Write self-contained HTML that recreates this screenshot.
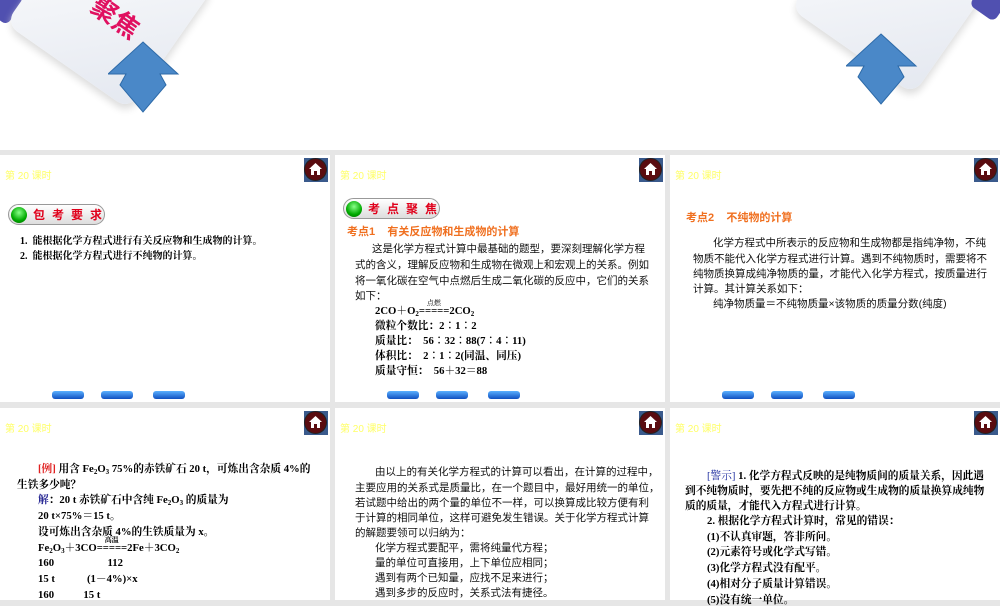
<!DOCTYPE html>
<html><head><meta charset="utf-8"><style>
*{margin:0;padding:0;box-sizing:border-box}
body{width:1000px;height:600px;overflow:hidden;background:#e6e6e6;position:relative;font-family:"Liberation Serif","Noto Serif CJK SC",serif;}
.top{position:absolute;left:0;top:0;width:1000px;height:150px;background:#fff;overflow:hidden}
.s{position:absolute;background:#fff;overflow:hidden}
.hd{position:absolute;font:10px "Liberation Sans","Noto Sans CJK SC",sans-serif;color:#ffff66}
.home{position:absolute;width:24px;height:24px;background:#3a5a8c}
.home:after{content:"";position:absolute;left:1px;top:1px;width:21px;height:21px;border-radius:50%;background:#5a0c10;box-shadow:0 0 0 1px #222}
.home svg{position:absolute;left:5px;top:5px;z-index:2}
.l{position:absolute;white-space:nowrap;font-size:10.7px;color:#000;line-height:12px}
.ss{font-family:"Liberation Sans","Noto Sans CJK SC",sans-serif;font-size:10.5px;color:#111}
.b{font-weight:bold}
.pill{position:absolute;white-space:nowrap;height:21px;border-radius:11px;border:1px solid #999;background:linear-gradient(#fff,#ddd);font:bold 12px "Noto Sans CJK SC",sans-serif;color:#e0001b;letter-spacing:7px;padding-left:24px;line-height:19px}
.pill:before{content:"";position:absolute;left:2px;top:2px;width:16px;height:16px;border-radius:50%;background:radial-gradient(circle at 50% 35%,#8f8,#0a0 60%,#060)}
.or{color:#f07020;font-family:"Liberation Sans","Noto Sans CJK SC",sans-serif;font-weight:bold;font-size:11px}
.nav{position:absolute;width:32px;height:8px;border-radius:3px;background:linear-gradient(#5ab0ff,#1050c0)}
sub{font-size:7px;vertical-align:-2px}
</style></head><body>
<div class="top">
  <div style="position:absolute;left:-10px;top:-10px;width:28px;height:30px;background:#5050b0;border-radius:6px;transform:rotate(35deg)"></div>
  <div style="position:absolute;left:35px;top:-70px;width:150px;height:150px;background:linear-gradient(135deg,#fff,#e4e8f0);border-radius:14px;transform:rotate(35deg);box-shadow:3px 4px 8px #ddd"></div>
  <div style="position:absolute;left:90px;top:-2px;font:bold 26px 'Noto Sans CJK SC',sans-serif;color:#e01060;transform:rotate(35deg);white-space:nowrap">聚焦</div>
  <svg style="position:absolute;left:108px;top:40px" width="72" height="74"><path d="M35 2 L70 34 L52 34 L58 45 L35 72 L12 45 L18 34 L0 34 Z" fill="#4a88c8" stroke="#2d6aa8"/></svg>
  <div style="position:absolute;left:820px;top:-85px;width:150px;height:150px;background:linear-gradient(135deg,#fff,#e4e8f0);border-radius:14px;transform:rotate(35deg);box-shadow:3px 4px 8px #ddd"></div>
  <div style="position:absolute;left:975px;top:-14px;width:30px;height:30px;background:#5050b0;border-radius:6px;transform:rotate(35deg)"></div>
  <svg style="position:absolute;left:846px;top:32px" width="72" height="74"><path d="M35 2 L70 34 L52 34 L58 45 L35 72 L12 45 L18 34 L0 34 Z" fill="#4a88c8" stroke="#2d6aa8"/></svg>
</div>

<div class="s" style="left:0;top:155px;width:330px;height:247px"></div>
<div class="s" style="left:335px;top:155px;width:330px;height:247px"></div>
<div class="s" style="left:670px;top:155px;width:330px;height:247px"></div>
<div class="s" style="left:0;top:408px;width:330px;height:192px"></div>
<div class="s" style="left:335px;top:408px;width:330px;height:192px"></div>
<div class="s" style="left:670px;top:408px;width:330px;height:192px"></div>

<div class="hd" style="left:5px;top:167px">第 20 课时</div>
<div class="hd" style="left:340px;top:167px">第 20 课时</div>
<div class="hd" style="left:675px;top:167px">第 20 课时</div>
<div class="hd" style="left:5px;top:420px">第 20 课时</div>
<div class="hd" style="left:340px;top:420px">第 20 课时</div>
<div class="hd" style="left:675px;top:420px">第 20 课时</div>

<div class="home" style="left:304px;top:158px"><svg width="13" height="12"><path d="M6.5 0 L13 6 L11 6 L11 12 L8 12 L8 8 L5 8 L5 12 L2 12 L2 6 L0 6Z" fill="#fff"/></svg></div>
<div class="home" style="left:639px;top:158px"><svg width="13" height="12"><path d="M6.5 0 L13 6 L11 6 L11 12 L8 12 L8 8 L5 8 L5 12 L2 12 L2 6 L0 6Z" fill="#fff"/></svg></div>
<div class="home" style="left:974px;top:158px"><svg width="13" height="12"><path d="M6.5 0 L13 6 L11 6 L11 12 L8 12 L8 8 L5 8 L5 12 L2 12 L2 6 L0 6Z" fill="#fff"/></svg></div>
<div class="home" style="left:304px;top:411px"><svg width="13" height="12"><path d="M6.5 0 L13 6 L11 6 L11 12 L8 12 L8 8 L5 8 L5 12 L2 12 L2 6 L0 6Z" fill="#fff"/></svg></div>
<div class="home" style="left:639px;top:411px"><svg width="13" height="12"><path d="M6.5 0 L13 6 L11 6 L11 12 L8 12 L8 8 L5 8 L5 12 L2 12 L2 6 L0 6Z" fill="#fff"/></svg></div>
<div class="home" style="left:974px;top:411px"><svg width="13" height="12"><path d="M6.5 0 L13 6 L11 6 L11 12 L8 12 L8 8 L5 8 L5 12 L2 12 L2 6 L0 6Z" fill="#fff"/></svg></div>

<div class="nav" style="left:52px;top:391px"></div><div class="nav" style="left:101px;top:391px"></div><div class="nav" style="left:153px;top:391px"></div>
<div class="nav" style="left:387px;top:391px"></div><div class="nav" style="left:436px;top:391px"></div><div class="nav" style="left:488px;top:391px"></div>
<div class="nav" style="left:722px;top:391px"></div><div class="nav" style="left:771px;top:391px"></div><div class="nav" style="left:823px;top:391px"></div>

<!-- slide 1 -->
<div class="pill" style="left:8px;top:204px;width:97px">包考要求</div>
<div class="l b" style="left:20px;top:236px;font-size:10px">1.&nbsp; 能根据化学方程式进行有关反应物和生成物的计算。</div>
<div class="l b" style="left:20px;top:251px;font-size:10px">2.&nbsp; 能根据化学方程式进行不纯物的计算。</div>

<!-- slide 2 -->
<div class="pill" style="left:343px;top:198px;width:97px">考点聚焦</div>
<div class="l or" style="left:347px;top:226px">考点1&nbsp;&nbsp;&nbsp; 有关反应物和生成物的计算</div>
<div class="l ss" style="left:372px;top:243px">这是化学方程式计算中最基础的题型，要深刻理解化学方程</div>
<div class="l ss" style="left:355px;top:259px">式的含义，理解反应物和生成物在微观上和宏观上的关系。例如</div>
<div class="l ss" style="left:355px;top:275px">将一氧化碳在空气中点燃后生成二氧化碳的反应中，它们的关系</div>
<div class="l ss" style="left:355px;top:290px">如下：</div>
<div class="l b" style="left:375px;top:305px">2CO＋O<sub>2</sub><span style="position:relative">=====<span style="position:absolute;left:8px;top:-8px;font-size:7px;font-weight:normal">点燃</span></span>2CO<sub>2</sub></div>
<div class="l b" style="left:375px;top:320px">微粒个数比：2∶1∶2</div>
<div class="l b" style="left:375px;top:335px">质量比：&nbsp; 56∶32∶88(7∶4∶11)</div>
<div class="l b" style="left:375px;top:350px">体积比：&nbsp; 2∶1∶2(同温、同压)</div>
<div class="l b" style="left:375px;top:365px">质量守恒：&nbsp; 56＋32＝88</div>

<!-- slide 3 -->
<div class="l or" style="left:686px;top:212px">考点2&nbsp;&nbsp;&nbsp; 不纯物的计算</div>
<div class="l ss" style="left:713px;top:237px">化学方程式中所表示的反应物和生成物都是指纯净物，不纯</div>
<div class="l ss" style="left:693px;top:253px">物质不能代入化学方程式进行计算。遇到不纯物质时，需要将不</div>
<div class="l ss" style="left:693px;top:268px">纯物质换算成纯净物质的量，才能代入化学方程式，按质量进行</div>
<div class="l ss" style="left:693px;top:283px">计算。其计算关系如下：</div>
<div class="l ss" style="left:713px;top:298px">纯净物质量＝不纯物质量×该物质的质量分数(纯度)</div>

<!-- slide 4 -->
<div class="l b" style="left:38px;top:463px"><span style="color:#e02020">[例]</span> 用含 Fe<sub>2</sub>O<sub>3</sub> 75%的赤铁矿石 20 t，可炼出含杂质 4%的</div>
<div class="l b" style="left:17px;top:479px">生铁多少吨？</div>
<div class="l b" style="left:38px;top:494px"><span style="color:#202090">解</span>：20 t 赤铁矿石中含纯 Fe<sub>2</sub>O<sub>3</sub> 的质量为</div>
<div class="l b" style="left:38px;top:510px">20 t×75%＝15 t。</div>
<div class="l b" style="left:38px;top:526px">设可炼出含杂质 4%的生铁质量为 x。</div>
<div class="l b" style="left:38px;top:542px">Fe<sub>2</sub>O<sub>3</sub>＋3CO<span style="position:relative">=====<span style="position:absolute;left:8px;top:-8px;font-size:7px">高温</span></span>2Fe＋3CO<sub>2</sub></div>
<div class="l b" style="left:38px;top:557px">160&nbsp;&nbsp;&nbsp;&nbsp;&nbsp;&nbsp;&nbsp;&nbsp;&nbsp;&nbsp;&nbsp;&nbsp;&nbsp;&nbsp;&nbsp;&nbsp;&nbsp;&nbsp;&nbsp; 112</div>
<div class="l b" style="left:38px;top:573px">15 t&nbsp;&nbsp;&nbsp;&nbsp;&nbsp;&nbsp;&nbsp;&nbsp;&nbsp;&nbsp;&nbsp; (1－4%)×x</div>
<div class="l b" style="left:38px;top:589px">160&nbsp;&nbsp;&nbsp;&nbsp;&nbsp;&nbsp;&nbsp;&nbsp;&nbsp;&nbsp; 15 t</div>

<!-- slide 5 -->
<div class="l ss" style="left:375px;top:466px">由以上的有关化学方程式的计算可以看出，在计算的过程中，</div>
<div class="l ss" style="left:355px;top:482px">主要应用的关系式是质量比，在一个题目中，最好用统一的单位，</div>
<div class="l ss" style="left:355px;top:497px">若试题中给出的两个量的单位不一样，可以换算成比较方便有利</div>
<div class="l ss" style="left:355px;top:512px">于计算的相同单位，这样可避免发生错误。关于化学方程式计算</div>
<div class="l ss" style="left:355px;top:527px">的解题要领可以归纳为：</div>
<div class="l ss" style="left:375px;top:542px">化学方程式要配平，需将纯量代方程；</div>
<div class="l ss" style="left:375px;top:557px">量的单位可直接用，上下单位应相同；</div>
<div class="l ss" style="left:375px;top:572px">遇到有两个已知量，应找不足来进行；</div>
<div class="l ss" style="left:375px;top:587px">遇到多步的反应时，关系式法有捷径。</div>

<!-- slide 6 -->
<div class="l b" style="left:707px;top:470px"><span style="color:#2030a0;font-weight:normal">[警示]</span> 1. 化学方程式反映的是纯物质间的质量关系，因此遇</div>
<div class="l b" style="left:685px;top:485px">到不纯物质时，要先把不纯的反应物或生成物的质量换算成纯物</div>
<div class="l b" style="left:685px;top:500px">质的质量，才能代入方程式进行计算。</div>
<div class="l b" style="left:707px;top:515px">2. 根据化学方程式计算时，常见的错误：</div>
<div class="l b" style="left:707px;top:531px">(1)不认真审题，答非所问。</div>
<div class="l b" style="left:707px;top:546px">(2)元素符号或化学式写错。</div>
<div class="l b" style="left:707px;top:562px">(3)化学方程式没有配平。</div>
<div class="l b" style="left:707px;top:578px">(4)相对分子质量计算错误。</div>
<div class="l b" style="left:707px;top:594px">(5)没有统一单位。</div>
</body></html>
